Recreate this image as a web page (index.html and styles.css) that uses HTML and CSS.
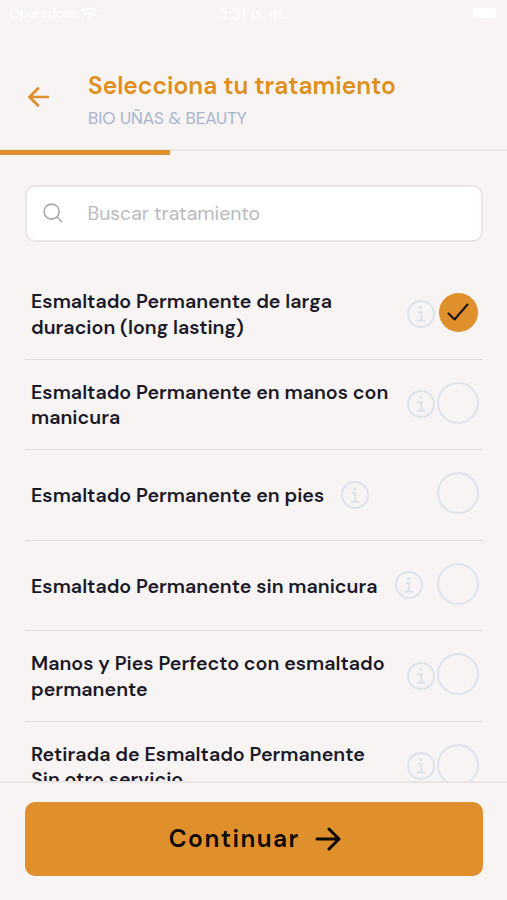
FILE: index.html
```html
<!DOCTYPE html>
<html lang="es">
<head>
<meta charset="utf-8">
<title>Selecciona tu tratamiento</title>
<link rel="stylesheet" href="styles.css">
</head>
<body>
<svg class="defs" width="0" height="0"><defs>
<symbol id="info" viewBox="0 0 28 28"><g fill="none" stroke="currentColor"><circle cx="14" cy="14" r="13" stroke-width="2"/><path d="M10.7 12h3.5v8.6M9.8 20.7h8.4" stroke-width="2"/></g><circle cx="13.7" cy="7.6" r="1.7" fill="currentColor"/></symbol>
</defs></svg>
<div class="screen">
  <div class="status">
    <div class="carrier"><span>Operadora</span><svg width="18" height="14" viewBox="0 0 18 14" fill="none" stroke="#fff" stroke-width="2.6"><path d="M1 4.5Q9-2 17 4.5M4 8q5-4 10 0"/><circle cx="9" cy="11.3" r="1" fill="#fff"/></svg></div>
    <span class="time">5:31 p. m.</span>
    <i class="battery"></i>
  </div>
  <header class="header">
    <svg class="back" width="22" height="20" viewBox="0 0 22 20" fill="none" stroke="currentColor" stroke-width="2.7" stroke-linecap="round" stroke-linejoin="round"><path d="M20 10H2M10 1.5L1.5 10l8.5 8.5"/></svg>
    <div><h1>Selecciona tu tratamiento</h1><p class="salon">BIO UÑAS &amp; BEAUTY</p></div>
  </header>
  <div class="progress"><div class="bar"></div></div>
  <main class="content">
    <div class="search">
      <svg width="20" height="20" viewBox="0 0 20 20" fill="none" stroke="#a9a9a9" stroke-width="1.6" stroke-linecap="round"><circle cx="8.6" cy="8.6" r="7.5"/><path d="M14 14l4.7 4.7"/></svg>
      <span>Buscar tratamiento</span>
    </div>
    <ul class="list">
      <li class="row wide"><span class="name">Esmaltado Permanente de larga<br>duracion (long lasting)</span><svg class="info"><use href="#info"/></svg><span class="check on"><svg width="22" height="18" viewBox="0 0 22 18" fill="none" stroke="#17120c" stroke-width="2" stroke-linecap="round" stroke-linejoin="round"><path d="M1.5 10.5l6 6L20.5 1.5"/></svg></span></li>
      <li class="row wide"><span class="name">Esmaltado Permanente en manos con<br>manicura</span><svg class="info"><use href="#info"/></svg><span class="check"></span></li>
      <li class="row"><span class="name">Esmaltado Permanente en pies</span><svg class="info"><use href="#info"/></svg><span class="check"></span></li>
      <li class="row"><span class="name">Esmaltado Permanente sin manicura</span><svg class="info"><use href="#info"/></svg><span class="check"></span></li>
      <li class="row wide"><span class="name">Manos y Pies Perfecto con esmaltado<br>permanente</span><svg class="info"><use href="#info"/></svg><span class="check"></span></li>
      <li class="row wide"><span class="name">Retirada de Esmaltado Permanente<br>Sin otro servicio</span><svg class="info"><use href="#info"/></svg><span class="check"></span></li>
    </ul>
  </main>
  <footer class="footer">
    <button class="cta"><span>Continuar</span><svg width="26" height="24" viewBox="0 0 26 24" fill="none" stroke="currentColor" stroke-width="3" stroke-linecap="round" stroke-linejoin="round"><path d="M2 12h22M14 2l10 10-10 10"/></svg></button>
  </footer>
</div>
</body>
</html>
```

FILE: styles.css
```css
* { box-sizing: border-box; }
body { margin: 0; background: #f7f4f3; font-family: "DM Sans", Inter, sans-serif; }
.defs { display: block; height: 0; }
.screen { width: 507px; height: 900px; display: flex; flex-direction: column; overflow: hidden; }
.status { height: 64px; flex: none; padding: 5px 11px 0 9px; display: grid; grid-template-columns: 1fr auto 1fr; align-items: start; color: #fff; font-size: 15px; line-height: 18px; }
.carrier { display: flex; align-items: center; gap: 3px; }
.carrier span { font-size: 13.5px; }
.time { letter-spacing: .5px; }
.battery { justify-self: end; width: 23px; height: 10px; margin-top: 3px; border-radius: 2px; background: #fff; }
.header { height: 85px; flex: none; padding: 6px 0 0 28px; display: flex; gap: 38px; }
.back { margin-top: 17px; color: #df8f2b; }
h1 { margin: 0; font-size: 24.5px; line-height: 32px; font-weight: 600; color: #e08e1c; white-space: nowrap; }
.salon { margin: 6px 0 0; font-size: 17px; line-height: 20px; color: #a5b3ce; white-space: nowrap; }
.progress { height: 6px; flex: none; border-top: 2px solid #e8e5e4; }
.bar { width: 169.5px; height: 5px; margin-top: -1px; background: #df8f2b; }
.content { flex: 1; min-height: 0; overflow: hidden; padding: 30px 24.5px 0 25px; }
.search { height: 57px; border: 2px solid #e8e5e4; border-radius: 10px; background: #fff; display: flex; align-items: center; gap: 25px; padding: 0 15px 1px 15.5px; font-size: 19.4px; color: #b9babd; white-space: nowrap; }
.list { list-style: none; margin: 27px 0 0; padding: 0; }
.row { height: 90.5px; border-bottom: 1.5px solid #dedada; display: flex; align-items: center; padding: 0 3.5px 0 6px; }
.name { margin-right: 17px; padding-top: 2px; white-space: nowrap; font-size: 19.67px; line-height: 25.5px; font-weight: 600; color: #1b1928; }
.wide .name { width: 359px; flex: none; }
.info { width: 28px; height: 28px; flex: none; color: #dce3ef; }
.check { width: 42px; height: 42px; flex: none; margin: 0 0 3px auto; border: 2px solid #dce3ef; border-radius: 50%; display: flex; align-items: center; justify-content: center; }
.check.on { width: 39px; height: 39px; margin-right: 1.5px; border: 0; background: #df8f2b; }
.footer { height: 119px; flex: none; border-top: 2px solid #e8e5e4; padding: 19px 24.5px 0 25px; }
.cta { width: 100%; height: 74px; border: 0; border-radius: 10px; background: #df8f2b; color: #0b0703; font: 600 24.5px "DM Sans", Inter, sans-serif; letter-spacing: 1.5px; display: flex; align-items: center; justify-content: center; gap: 15px; padding: 0 0 1px 2px; }
```
